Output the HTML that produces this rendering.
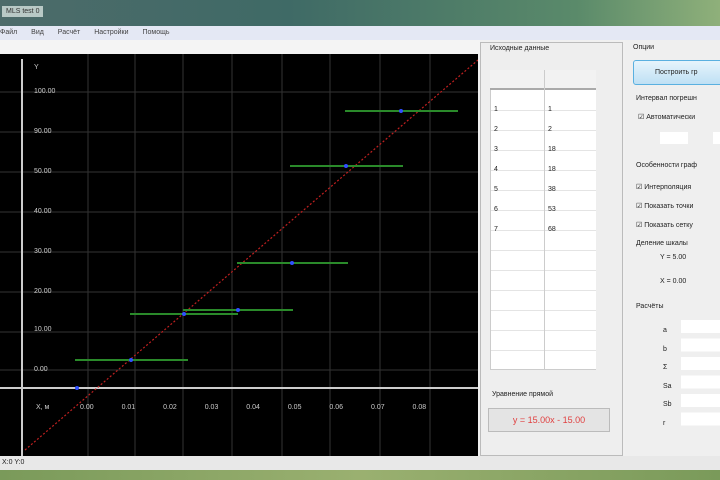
<!DOCTYPE html><html><head><meta charset="utf-8"><style>
body{margin:0;width:720px;height:480px;overflow:hidden;position:relative;font-family:"Liberation Sans","Noto Sans CJK SC",sans-serif;font-size:8px;background:#f0f0f0}
.a{position:absolute}
.lbl{position:absolute;color:#ccc;font-size:7px}
.t{color:#222;font-size:7px}
</style></head><body>
<div class="a" style="left:0;top:0;width:720px;height:26px;background:linear-gradient(90deg,#4d6b6a,#3f6a66 40%,#5a8a6a 80%,#8fb07a)"></div>
<div class="a t" style="left:2px;top:6px;background:#b9c9c6;padding:2px 4px;color:#333">MLS test 0</div>
<div class="a" style="left:0;top:26px;width:720px;height:14px;background:#e4e8f4"></div>
<div class="a t" style="left:0;top:29px;word-spacing:12px;color:#444">Файл Вид Расчёт Настройки Помощь</div>
<div class="a" style="left:0;top:40px;width:480px;height:14px;background:#f4f4f4"></div>
<div class="a" style="left:0;top:54px;width:478px;height:402px;background:#000"></div>
<svg class="a" style="left:0;top:54px" width="478" height="402">
<g stroke="#333" stroke-width="1">
<line x1="88" y1="0" x2="88" y2="402"/><line x1="135" y1="0" x2="135" y2="402"/><line x1="183" y1="0" x2="183" y2="402"/><line x1="232" y1="0" x2="232" y2="402"/><line x1="282" y1="0" x2="282" y2="402"/><line x1="330" y1="0" x2="330" y2="402"/><line x1="380" y1="0" x2="380" y2="402"/><line x1="430" y1="0" x2="430" y2="402"/>
<line x1="0" y1="38" x2="478" y2="38"/><line x1="0" y1="78" x2="478" y2="78"/><line x1="0" y1="118" x2="478" y2="118"/><line x1="0" y1="158" x2="478" y2="158"/><line x1="0" y1="198" x2="478" y2="198"/><line x1="0" y1="238" x2="478" y2="238"/><line x1="0" y1="278" x2="478" y2="278"/><line x1="0" y1="316" x2="478" y2="316"/>
</g>
<line x1="22" y1="5" x2="22" y2="402" stroke="#ccc" stroke-width="2"/>
<line x1="0" y1="334" x2="478" y2="334" stroke="#ccc" stroke-width="2"/>
<line x1="25" y1="396" x2="478" y2="6" stroke="#c02020" stroke-width="1.2" stroke-dasharray="2,2"/>
<g stroke="#2a8a2a" stroke-width="2">
<line x1="345" y1="57" x2="458" y2="57"/><line x1="290" y1="112" x2="403" y2="112"/><line x1="237" y1="209" x2="348" y2="209"/><line x1="183" y1="256" x2="293" y2="256"/><line x1="130" y1="260" x2="238" y2="260"/><line x1="75" y1="306" x2="188" y2="306"/>
</g>
<g fill="#3050ff"><circle cx="401" cy="57" r="2"/><circle cx="346" cy="112" r="2"/><circle cx="292" cy="209" r="2"/><circle cx="238" cy="256" r="2"/><circle cx="184" cy="260" r="2"/><circle cx="131" cy="306" r="2"/><circle cx="77" cy="334" r="2"/></g>
</svg>
<div class="lbl" style="left:34px;top:64px">Y</div>
<div class="lbl" style="left:34px;top:88px">100.00</div>
<div class="lbl" style="left:34px;top:128px">90.00</div>
<div class="lbl" style="left:34px;top:168px">50.00</div>
<div class="lbl" style="left:34px;top:208px">40.00</div>
<div class="lbl" style="left:34px;top:248px">30.00</div>
<div class="lbl" style="left:34px;top:288px">20.00</div>
<div class="lbl" style="left:34px;top:326px">10.00</div>
<div class="lbl" style="left:34px;top:366px">0.00</div>
<div class="lbl" style="left:36px;top:404px">X, м</div>
<div class="lbl" style="left:80px;top:404px;word-spacing:26px">0.00 0.01 0.02 0.03 0.04 0.05 0.06 0.07 0.08</div>
<div class="a" style="left:0;top:456px;width:720px;height:14px;background:#e8e8e8"></div>
<div class="a t" style="left:2px;top:459px">X:0 Y:0</div>
<div class="a" style="left:0;top:470px;width:720px;height:10px;background:linear-gradient(90deg,#7a9a5a,#9ab070,#7a9a5a)"></div>
<div class="a" style="left:480px;top:42px;width:143px;height:414px;background:#eeeeee;border:1px solid #bbb;box-sizing:border-box"></div>
<div class="a t" style="left:490px;top:45px">Исходные данные</div>
<div class="a" style="left:490px;top:70px;width:120px;height:300px;background:#fff;border:1px solid #ccc;box-sizing:border-box;background-image:repeating-linear-gradient(#fff 0 19px,#e4e4e4 19px 20px);background-position:0 20px"></div>
<div class="a" style="left:490px;top:70px;width:120px;height:20px;background:#f2f2f2;border-bottom:2px solid #aaa;box-sizing:border-box"></div>
<div class="a" style="left:544px;top:70px;width:1px;height:300px;background:#ccc"></div>
<div class="a" style="left:596px;top:70px;width:14px;height:300px;background:#eee"></div>
<div class="a t" style="left:494px;top:100px;line-height:20px">1<br>2<br>3<br>4<br>5<br>6<br>7</div>
<div class="a t" style="left:548px;top:100px;line-height:20px">1<br>2<br>18<br>18<br>38<br>53<br>68</div>
<div class="a t" style="left:492px;top:391px">Уравнение прямой</div>
<div class="a" style="left:488px;top:408px;width:122px;height:24px;background:#e4e4e4;border:1px solid #bbb;box-sizing:border-box;color:#e04040;font-size:9px;line-height:22px;text-align:center">y = 15.00x - 15.00</div>
<div class="a" style="left:625px;top:40px;width:95px;height:416px;background:#efefef"></div>
<div class="a t" style="left:633px;top:44px">Опции</div>
<div class="a" style="left:633px;top:60px;width:90px;height:25px;background:linear-gradient(#e6f4fc,#bfe0f4);border:1px solid #5ab0e0;border-radius:3px;box-sizing:border-box"></div>
<div class="a t" style="left:655px;top:69px">Построить гр</div>
<div class="a t" style="left:636px;top:95px">Интервал погрешн</div>
<div class="a t" style="left:638px;top:113px">☑ Автоматически</div>
<div class="a" style="left:660px;top:132px;width:28px;height:12px;background:#fff"></div>
<div class="a" style="left:713px;top:132px;width:10px;height:12px;background:#fff"></div>
<div class="a t" style="left:636px;top:162px">Особенности граф</div>
<div class="a t" style="left:636px;top:183px">☑ Интерполяция</div>
<div class="a t" style="left:636px;top:202px">☑ Показать точки</div>
<div class="a t" style="left:636px;top:221px">☑ Показать сетку</div>
<div class="a t" style="left:636px;top:240px">Деление шкалы</div>
<div class="a t" style="left:660px;top:254px">Y = 5.00</div>
<div class="a t" style="left:660px;top:278px">X = 0.00</div>
<div class="a t" style="left:636px;top:303px">Расчёты</div>
<div class="a t" style="left:663px;top:322px;line-height:18.5px">a<br>b<br>Σ<br>Sa<br>Sb<br>r</div>
<div class="a" style="left:681px;top:320px;width:40px;height:110px;background:repeating-linear-gradient(#fff 0 13px,#efefef 13px 18.5px)"></div>
</body></html>
